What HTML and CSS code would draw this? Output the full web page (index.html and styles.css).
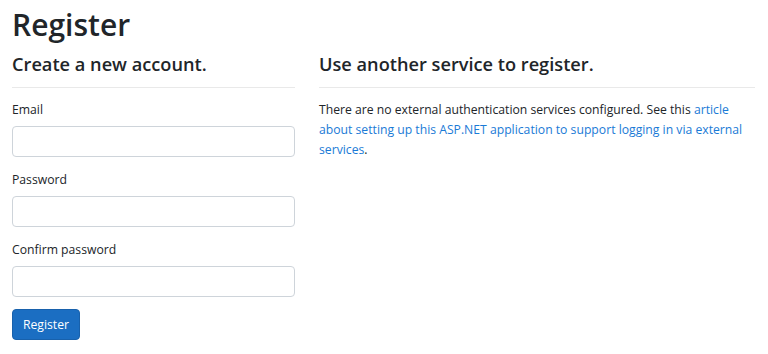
FILE: index.html
```html
<!DOCTYPE html>
<html lang="en">
<head>
<meta charset="utf-8">
<title>Register</title>
<link rel="stylesheet" href="styles.css">
</head>
<body>
<main class="page">
  <h1 class="title">Register</h1>
  <div class="row">
    <section class="col col-left">
      <form class="form">
        <h2 class="subtitle">Create a new account.</h2>
        <hr class="rule">
        <div class="group">
          <label class="label" for="email">Email</label>
          <input class="field" id="email" type="email">
        </div>
        <div class="group">
          <label class="label" for="password">Password</label>
          <input class="field" id="password" type="password">
        </div>
        <div class="group">
          <label class="label" for="confirm">Confirm password</label>
          <input class="field" id="confirm" type="password">
        </div>
        <button class="btn" type="button">Register</button>
      </form>
    </section>
    <section class="col col-right">
      <h2 class="subtitle">Use another service to register.</h2>
      <hr class="rule">
      <p class="text">There are no external authentication services configured. See this <a class="link" href="#">article
        about setting up this ASP.NET application to support logging in via external services</a>.</p>
    </section>
  </div>
</main>
</body>
</html>
```
FILE: styles.css
```css
html, body {
  margin: 0;
  padding: 0;
  background: #ffffff;
}
body {
  font-family: "Open Sans", "Noto Sans", sans-serif;
  font-size: 12.2px;
  line-height: 20px;
  color: #212529;
}
.title {
  margin: 6px 0 0 12px;
  font-size: 30px;
  line-height: 38px;
  font-weight: 600;
}
.row {
  display: flex;
}
.col {
  box-sizing: border-box;
  padding: 0 12px;
}
.col-left {
  width: 307px;
}
.col-right {
  width: 460px;
}
.subtitle {
  margin: 9px 0 0;
  font-size: 18.2px;
  line-height: 23px;
  font-weight: 600;
}
.rule {
  margin: 11px 0 12px;
  border: 0;
  border-top: 1px solid #e9e9e9;
  height: 0;
}
.group {
  display: flex;
  flex-direction: column;
  margin-bottom: 13px;
}
.label {
  display: block;
  margin-bottom: 6px;
}
.field {
  box-sizing: border-box;
  height: 31px;
  width: 100%;
  border: 1px solid #ced4da;
  border-radius: 4px;
  background: #fff;
  font: inherit;
  padding: 5px 10px;
}
.btn {
  margin-top: -1px;
  box-sizing: border-box;
  height: 31px;
  padding: 0 10px;
  border: 1px solid #1861ac;
  border-radius: 4px;
  background: #1b6ec2;
  color: #fff;
  font: inherit;
  line-height: 20px;
}
.text {
  margin: 0;
}
.link {
  color: #1a7ad6;
  text-decoration: none;
}
```
